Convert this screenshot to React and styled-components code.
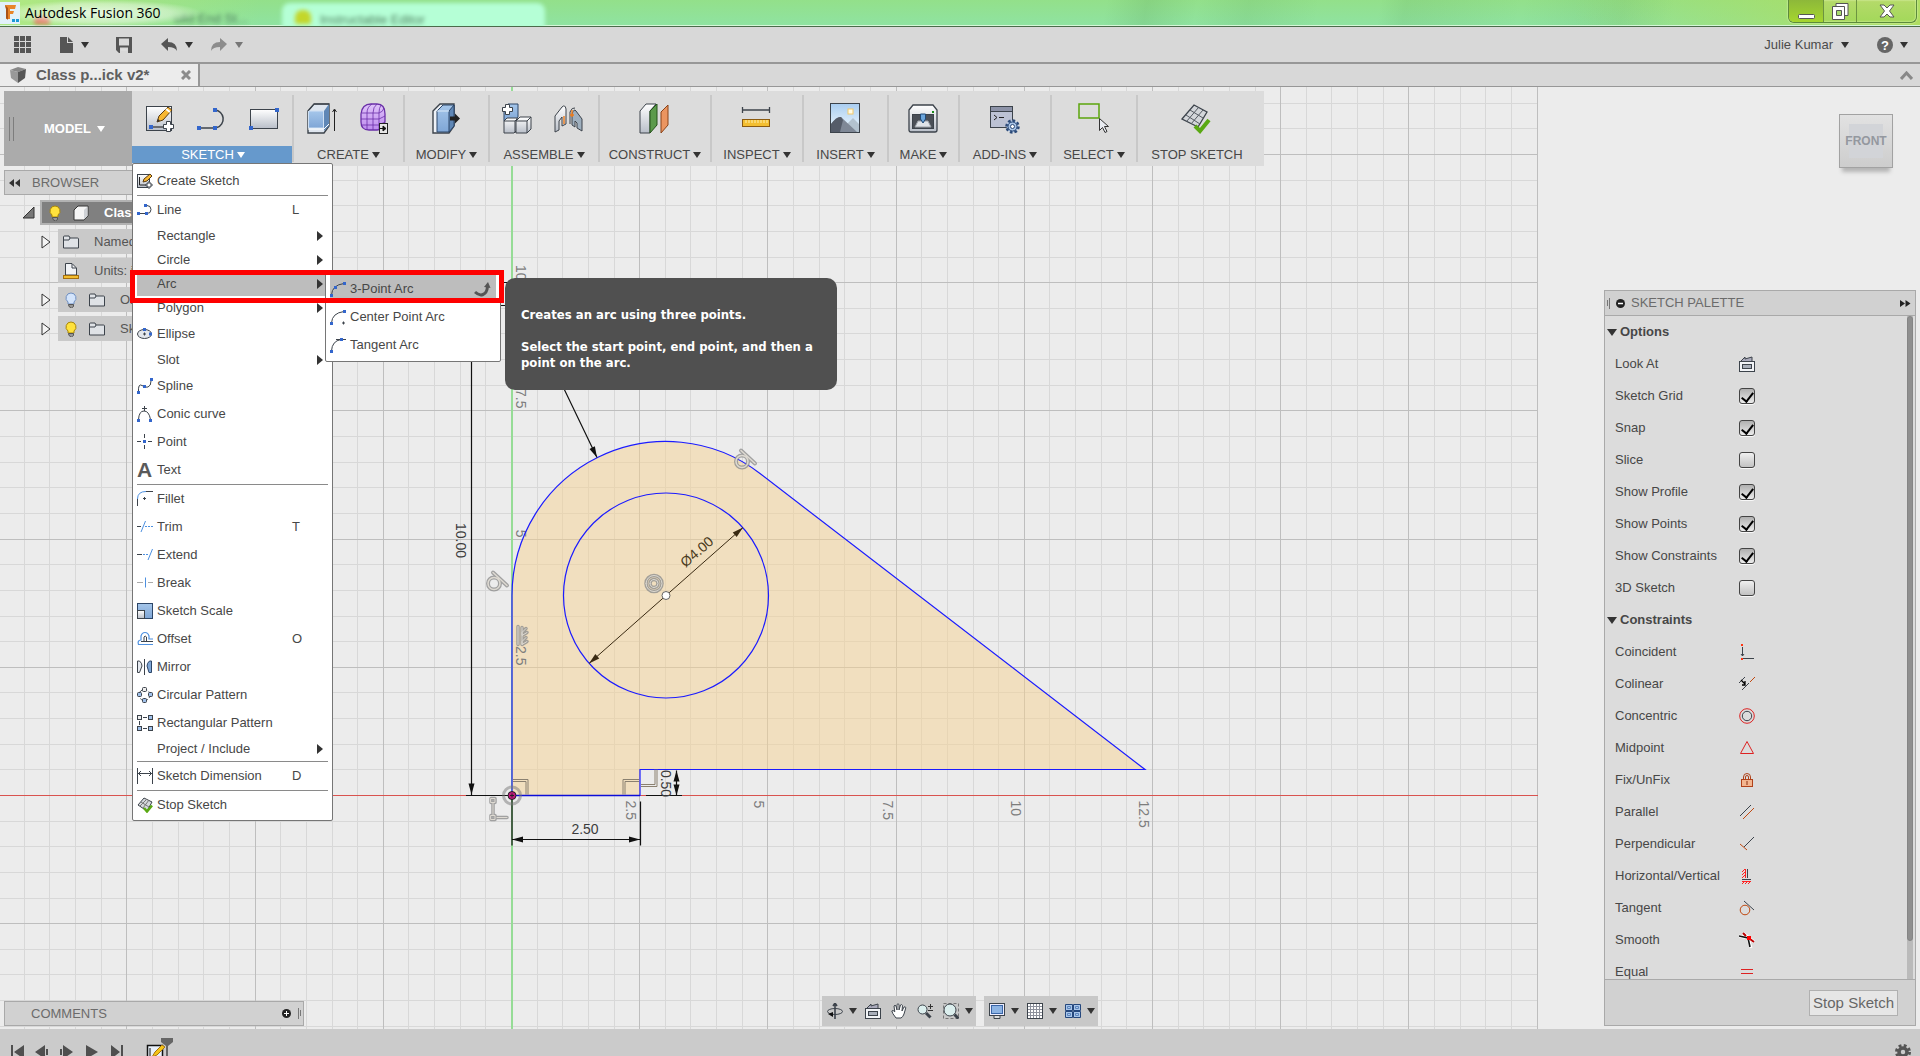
import React,{useState} from 'react';
import styled,{createGlobalStyle} from 'styled-components';

const Global=createGlobalStyle`
  *{box-sizing:border-box;}
  body{
    margin:0;
    font-family:"Liberation Sans",Arial,sans-serif;
    font-size:13px;
    line-height:16px;
    color:#474747;
    background:#ececec;
  }
  button{
    font:inherit;
    color:inherit;
    background:none;
    border:0;
    padding:0;
    margin:0;
    text-align:left;
  }
  svg{display:block;flex:none;}
`
const Page=styled.div`
  height:100vh;
  display:flex;
  flex-direction:column;
  overflow:hidden;
`
const Title={
  Bar:styled.header`
    height:27px;
    flex:none;
    display:flex;
    align-items:flex-start;
    position:relative;
    overflow:hidden;
    border-bottom:1px solid #4b6b4b;
    box-shadow:inset 0 -1px 0 #d5f7d8;
    background:
      linear-gradient(90deg,#b9ea7fcc 0,#b9ea7f00 260px),
      linear-gradient(100deg,#0000 1090px,#3a7a3a22 1130px,#0000 1180px,#3a7a3a18 1230px,#0000 1300px,#0000 1360px,#3a7a3a18 1385px,#0000 1500px,#3a7a3a18 1600px,#0000 1650px),
      linear-gradient(90deg,#0000 82%,#aede60 100%),
      linear-gradient(#93e08a,#8fe3a2);
  `,
  Name:styled.div`
    display:flex;
    align-items:center;
    gap:5px;
    height:26px;
    padding-right:40px;
    font:14px/20px "Open Sans","Noto Sans",sans-serif;
    color:#000;
    position:relative;
    background:radial-gradient(ellipse at center,#ffffffbb 0,#ffffff66 50%,#ffffff00 72%);
  `,
  Ghost:styled.div`
    position:absolute;
    left:${p=>p.$x}px;
    top:${p=>p.$lit?3:8}px;
    width:${p=>p.$w}px;
    height:28px;
    padding:${p=>p.$lit?'9px 38px':'3px 0'};
    border-radius:8px 8px 0 0;
    background:${p=>p.$lit?'#b5ffd6':'none'};
    color:#4f7f5f;
    filter:blur(2px);
    white-space:nowrap;
  `,
  Blob:styled.i`
    position:absolute;
    left:${p=>p.$x}px;
    bottom:2px;
    width:16px;
    height:${p=>p.$h}px;
    border-radius:7px 7px 2px 2px;
    background:${p=>p.$c};
    filter:blur(2px);
  `,
  Buttons:styled.div`
    display:flex;
    margin-left:auto;
    margin-right:3px;
    height:23px;
    position:relative;
    border:1px solid #5c8a3c;
    border-top:0;
    border-radius:0 0 6px 6px;
    box-shadow:0 0 2px #f4ffd0,inset 0 0 2px #f0ffc8;
    background:linear-gradient(#b5da6a,#a3d85a);
    overflow:hidden;
  `,
  Button:styled.button`
    width:${p=>p.$w}px;
    display:flex;
    align-items:center;
    justify-content:center;
    border-right:1px solid #6c9440;
    background:${p=>p.$hot?'linear-gradient(#8db83a,#a5d62e)':'none'};
    &:last-child{border-right:0;}
  `
}
const Quick={
  Bar:styled.nav`
    height:37px;
    flex:none;
    display:flex;
    align-items:center;
    padding:0 12px 0 14px;
    background:#d8d8d8;
    border-bottom:2px solid #979797;
  `,
  Item:styled.button`
    display:flex;
    align-items:center;
    gap:${p=>p.$gap||8}px;
    margin-right:${p=>p.$after||0}px;
    color:#4b4b4b;
  `,
  Spacer:styled.div`
    flex:1;
  `
}
const Caret=styled.i`
  display:block;
  width:0;
  height:0;
  flex:none;
  border:${p=>p.$size||4}px solid transparent;
  border-top:${p=>(p.$size||4)+2}px solid ${p=>p.$c||'#333'};
  border-bottom:0;
`
const Tabs={
  Strip:styled.div`
    height:23px;
    flex:none;
    display:flex;
    align-items:stretch;
    justify-content:space-between;
    background:#d8d8d8;
    border-bottom:1px solid #979797;
  `,
  Tab:styled.div`
    width:200px;
    display:flex;
    align-items:center;
    padding:0 7px 0 10px;
    gap:10px;
    background:#ececec;
    border-right:2px solid #979797;
    font-weight:bold;
    font-size:15px;
    color:#5f5f5f;
    & span{flex:1;}
  `,
  Fold:styled.button`
    padding:0 7px;
  `
}
const Stage={
  Area:styled.main`
    flex:1;
    min-height:0;
    position:relative;
    display:flex;
    background:#ececec;
  `,
  Drawing:styled.svg`
    position:absolute;
    left:0;
    top:0;
    width:100%;
    height:100%;
    font-family:"Liberation Sans",Arial,sans-serif;
  `,
  Left:styled.div`
    flex:1;
    min-width:0;
    display:flex;
    flex-direction:column;
    padding:4px 0 3px 4px;
    position:relative;
    z-index:2;
  `,
  Right:styled.div`
    width:312px;
    flex:none;
    margin-right:4px;
    padding:27px 0 3px;
    display:flex;
    flex-direction:column;
    position:relative;
    z-index:1;
  `
}
const Ribbon={
  Bar:styled.div`
    align-self:flex-start;
    display:flex;
    height:75px;
    background:#dcdcdc;
    position:relative;
    z-index:1;
  `,
  Model:styled.button`
    width:128px;
    display:flex;
    align-items:center;
    padding-left:5px;
    gap:6px;
    background:#ababab;
    color:#fff;
    font-weight:bold;
    & span{padding-left:24px;}
  `,
  Grip:styled.i`
    width:5px;
    height:24px;
    border:1px solid #7d7d7d;
    border-width:0 1px;
  `,
  Group:styled.div`
    width:${p=>p.$w}px;
    padding-right:${p=>p.$end||0}px;
    display:flex;
    flex-direction:column;
    position:relative;
    &:not(:nth-child(2))::before{
      content:'';
      position:absolute;
      left:0;
      top:4px;
      height:67px;
      width:2px;
      background:#c8c8c8;
    }
  `,
  Icons:styled.div`
    height:55px;
    display:flex;
    align-items:center;
    justify-content:center;
    gap:${p=>p.$gap||20}px;
    padding-bottom:2px;
  `,
  Label:styled.button`
    height:17px;
    display:flex;
    align-items:center;
    justify-content:center;
    gap:3px;
    padding-left:2px;
    white-space:nowrap;
    background:${p=>p.$on?'#6699cc':'none'};
    color:${p=>p.$on?'#fff':'#474747'};
  `
}
const Menu={
  List:styled.ul`
    position:absolute;
    left:0;
    top:72px;
    width:201px;
    margin:0;
    padding:3px 0 1px;
    list-style:none;
    background:#fff;
    border:1px solid #767676;
    border-radius:2px;
    & li{position:relative;}
    & li[data-open]{z-index:1;}
  `,
  Row:styled.button`
    display:flex;
    align-items:center;
    gap:4px;
    height:${p=>p.$short?24:28}px;
    width:calc(100% - 11px);
    margin:0 7px 0 4px;
    padding-right:2px;
    background:${p=>p.$on?'#bdbdbd':'none'};
    & span{flex:1;white-space:nowrap;}
    & kbd{font:inherit;width:31px;}
  `,
  Blank:styled.i`
    width:16px;
  `,
  Glyph:styled.b`
    width:16px;
    font-size:21px;
    line-height:24px;
    color:#5a5a5a;
  `,
  Arrow:styled.i`
    border:5px solid transparent;
    border-left:6px solid #333;
    border-right:0;
  `,
  Line:styled.li`
    height:1px;
    margin:0 4px;
    background:#8a8a8a;
  `,
  Sub:styled.div`
    position:absolute;
    left:192px;
    top:0;
    width:176px;
    padding:2px 0;
    background:#fff;
    border:1px solid #767676;
    border-radius:2px;
  `,
  SubRow:styled.button`
    display:flex;
    align-items:center;
    gap:4px;
    height:28px;
    width:calc(100% - 8px);
    margin:0 4px;
    padding-right:5px;
    background:${p=>p.$on?'#bdbdbd':'none'};
    & span{flex:1;}
  `,
  Mark:styled.div`
    position:absolute;
    left:-3px;
    top:-2px;
    width:374px;
    height:33px;
    border:5px solid #fe0000;
    pointer-events:none;
  `,
  Tip:styled.div`
    position:absolute;
    left:372px;
    top:6px;
    width:332px;
    padding:29px 16px 19px 16px;
    border-radius:10px;
    background:#505050;
    color:#fff;
    font:bold 13px/16px "DejaVu Sans Condensed","Noto Sans",sans-serif;
    & p{margin:0 0 16px;}
    & p:last-child{margin:0;}
  `
}
const Panel={
  Head:styled.div`
    width:300px;
    height:25px;
    flex:none;
    display:flex;
    align-items:center;
    margin-top:${p=>p.$top||0}px;
    padding:0 2px 0 ${p=>p.$pad||4}px;
    gap:${p=>p.$gap||12}px;
    background:#d1d1d1;
    border:1px solid #a9a9a9;
    color:#6b6b6b;
    & span{flex:1;}
  `,
  Bottom:styled.div`
    margin-top:auto;
  `
}
const Tree={
  List:styled.div`
    display:flex;
    flex-direction:column;
    gap:4px;
    margin-top:5px;
    margin-left:18px;
    width:282px;
  `,
  Row:styled.div`
    display:flex;
    align-items:center;
    height:25px;
    padding-left:${p=>p.$indent||0}px;
  `,
  Toggle:styled.button`
    width:18px;
  `,
  Body:styled.div`
    flex:1;
    height:100%;
    display:flex;
    align-items:center;
    gap:10px;
    padding-left:5px;
    background:${p=>p.$root?'#808080':'#c9c9c9'};
    border:${p=>p.$root?'2px solid #b2b2b2':'0'};
    color:${p=>p.$root?'#fff':'#555'};
    font-weight:${p=>p.$root?'bold':'normal'};
    & span{padding-left:5px;}
  `
}
const Cube=styled.div`
  align-self:flex-end;
  margin:0 23px 122px 0;
  width:54px;
  height:54px;
  flex:none;
  display:flex;
  align-items:center;
  justify-content:center;
  border:1px solid #a2a2a2;
  background:linear-gradient(#e2e2e2,#cdcdcd);
  box-shadow:0 7px 4px -3px #b4b4b4;
  & b{
    width:34px;
    height:34px;
    display:flex;
    align-items:center;
    justify-content:center;
    background:#d2d4d8;
    color:#94989f;
    font-size:12px;
  }
`
const Palette={
  Box:styled.section`
    flex:1;
    min-height:0;
    display:flex;
    flex-direction:column;
    border:1px solid #a9a9a9;
    background:#dcdcdc;
  `,
  Head:styled.div`
    height:25px;
    flex:none;
    display:flex;
    align-items:center;
    padding:0 4px 0 2px;
    gap:6px;
    background:#d1d1d1;
    border-bottom:1px solid #a9a9a9;
    color:#6b6b6b;
    & span{flex:1;}
  `,
  Body:styled.div`
    flex:1;
    min-height:0;
    display:flex;
    overflow:hidden;
  `,
  Rows:styled.div`
    flex:1;
  `,
  Track:styled.div`
    width:6px;
    margin-right:2px;
    background:#bababa;
    &::before{
      content:'';
      display:block;
      height:94%;
      border-radius:3px;
      background:#8f8f8f;
      border:1px solid #858585;
    }
  `,
  Section:styled.button`
    height:32px;
    display:flex;
    align-items:center;
    gap:3px;
    padding-left:2px;
    font-weight:bold;
  `,
  Row:styled.label`
    height:32px;
    display:flex;
    align-items:center;
    padding-left:10px;
    & span{width:124px;}
  `,
  Tool:styled.button`
    height:32px;
    width:100%;
    display:flex;
    align-items:center;
    padding-left:10px;
    & span{width:124px;}
  `,
  Check:styled.input`
    appearance:none;
    width:16px;
    height:16px;
    margin:0;
    border:1px solid #444;
    border-radius:3px;
    box-shadow:0 1px 0 #f8f8f8;
    background:linear-gradient(#f0f0f0,#c2c2c2);
    &:checked{
      background:linear-gradient(#b0b0b0,#ececec);
    }
    &:checked::after{
      content:'';
      display:block;
      width:5px;
      height:10px;
      margin:1px auto;
      border:solid #000;
      border-width:0 2px 2px 0;
      transform:rotate(38deg);
    }
  `,
  Foot:styled.div`
    height:46px;
    flex:none;
    display:flex;
    align-items:center;
    justify-content:flex-end;
    padding-right:17px;
    background:#d1d1d1;
    border-top:1px solid #a9a9a9;
  `,
  Stop:styled.button`
    height:26px;
    padding:0 3px;
    border:1px solid #b0b0b0;
    background:#e6e6e6;
    font-size:15px;
    color:#666;
  `
}
const Nav={
  Wrap:styled.div`
    position:absolute;
    z-index:1;
    left:50%;
    bottom:3px;
    transform:translateX(-50%);
    display:flex;
    gap:8px;
  `,
  Bar:styled.div`
    height:30px;
    display:flex;
    align-items:center;
    background:#c8c8c8;
  `,
  Button:styled.button`
    padding:0 5px;
  `,
  More:styled.button`
    width:12px;
    padding-left:1px;
  `
}
const Timeline={
  Bar:styled.footer`
    height:27px;
    flex:none;
    display:flex;
    align-items:flex-start;
    padding:16px 9px 0 10px;
    gap:9px;
    overflow:hidden;
    background:#cbcbcb;
  `,
  Step:styled.button`
    margin-left:11px;
    margin-top:-7px;
  `,
  Gear:styled.button`
    margin-left:auto;
    margin-top:-1px;
  `
}

/* shared pieces */
const D='#3c434b',B='#3366cc',R='#d22';
function Svg({w=16,h,children}){
  return <svg width={w} height={h||w} viewBox={`0 0 ${w} ${h||w}`} fill="none" stroke={D} aria-hidden="true">{children}</svg>
}
const Dot=({x,y,s=3,c=B})=><rect x={x} y={y} width={s} height={s} fill={c} stroke="none"/>
const Plus=({x,y})=>(
  <path d={`M${x+3} ${y}h4v3h3v4h-3v3h-4v-3h-3v-4h3z`} fill="#fff"/>
)
function Defs(){
  return (
    <defs>
      <linearGradient id="gs" x1="0" y1="0" x2="0" y2="1"><stop offset="0" stopColor="#fff"/><stop offset="1" stopColor="#b9bfc9"/></linearGradient>
      <linearGradient id="gb" x1="0" y1="0" x2="0" y2="1"><stop offset="0" stopColor="#a5c6ea"/><stop offset="1" stopColor="#7fa6d6"/></linearGradient>
      <linearGradient id="gp" x1="0" y1="0" x2="0" y2="1"><stop offset="0" stopColor="#e0c4fa"/><stop offset="1" stopColor="#bd8bee"/></linearGradient>
      <linearGradient id="sky" x1="0" y1="0" x2="0" y2="1"><stop offset="0" stopColor="#a9cdf0"/><stop offset="1" stopColor="#f3fbff"/></linearGradient>
    </defs>
  )
}

/* ribbon icons, 30px box */
const big={
  sketch:<Svg w={30}>
    <rect x="1.5" y="3.5" width="25" height="24" fill="url(#gs)"/>
    <path d="M5 24h13" stroke="#111"/><Dot x={4} y={22} s={4}/>
    <path d="M12 19l2-6 9-9 4 3-9 10z" fill="#f7b733" stroke="#5a3a10"/><path d="M21 6l4 3" stroke="#fff" strokeWidth="2"/><path d="M12 19l1-3 2 1.500z" fill="#333" stroke="none"/>
    <Plus x={18.5} y={18.5}/>
  </Svg>,
  line:<Svg w={30}><path d="M3 25h16M18 7a9 9 0 0 1 2 17.500" strokeWidth="1.500"/><Dot x={0} y={23} s={4}/><Dot x={16} y={23} s={4}/><Dot x={16} y={5} s={4}/></Svg>,
  rect:<Svg w={30}><rect x="1.5" y="6.500" width="27" height="19" fill="url(#gs)"/><Dot x={0} y={23} s={4}/><Dot x={26} y={5} s={4}/></Svg>,
  extrude:<Svg w={32} h={32}>
    <path d="M2 9l6-7h15v22l-5 7H2z" fill="#dfe6ef" strokeWidth="1.400"/><path d="M2.500 9h15v17h-15z" fill="url(#gb)" stroke="#cfe0f3"/><path d="M18 9l5-7v22l-5 5z" fill="#5f87b6" stroke="none"/><path d="M2 9l6-7h15" /><path d="M2 27h16l5-5" stroke="#fff"/>
    <path d="M28.500 29V8M26.500 10l2-3 2 3" stroke="#222"/>
  </Svg>,
  form:<Svg w={32} h={32}>
    <path d="M3 12Q4 2 13 2h6q8 0 8 10v7q0 9-8 9h-8q-8 0-8-8z" fill="url(#gp)" stroke="#6a2fa8" strokeWidth="1.300"/>
    <path d="M4 11h17q4-1 5-5M3 17h18l6-3M3 23h18l6-3M9 28V11q0-6 5-9M15 28V11q0-6 4-9M21 28V11q0-5 2-8" stroke="#6a2fa8" strokeWidth=".8"/>
    <rect x="21.500" y="21.500" width="8" height="10" fill="#e6e6e6" stroke="#222"/><path d="M22 26.500h4M25 24l3 2.500-3 2.500z" fill="#111" stroke="#111"/>
  </Svg>,
  press:<Svg w={32} h={32}>
    <path d="M3 9l7-7h14v22l-5 7H3z" fill="#eef2f7" strokeWidth="1.400"/><path d="M7 9l6-6h11v21l-5 6H7z" fill="url(#gb)" stroke="#2d4668"/><path d="M19 9l5-6v21l-5 6z" fill="#5f87b6" stroke="#2d4668"/><path d="M7 9h12" stroke="#dcebfa"/>
    <path d="M20 14.500h5v-3l5 5-5 5v-3h-5z" fill="#222" stroke="none"/>
  </Svg>,
  comp:<Svg w={32} h={32}>
    <path d="M3 6l4-4h10v13l-3 4H3z" fill="url(#gb)" stroke="#2d4668"/>
    <path d="M3 19l3-3h10v12l-3 3H3z" fill="url(#gs)"/><path d="M15 19l4-4h11v12l-4 4H15z" fill="url(#gs)"/><path d="M15 19h11v12M26 19l4-4M3 19h11v12M14 19l2-2"/>
    <Plus x={1.5} y={2.5}/>
  </Svg>,
  joint:<Svg w={32} h={32}>
    <path d="M2 14l7-9q3-3 4 2v15l-4 2V15l-3 4v9l-4 2z" fill="url(#gs)"/><path d="M19 12q2-6 4-3l6 8v12l-5-3v-5l-2-2v6l-3-2z" fill="#9fb0bf"/><path d="M17 22V10q2-5 5-4" fill="none"/>
    <path d="M11 14v8M19 8v7M17 13h4" stroke="#ef7d1c" strokeWidth="1.400"/>
  </Svg>,
  plane:<Svg w={32} h={32}>
    <path d="M2 9l6-7h10l-6 7v22H2z" fill="url(#gs)"/><path d="M12 9l7-7v21l-7 8z" fill="#5c9a4b" stroke="#24521b"/><path d="M23 10l7-7v20l-7 8z" fill="#eb9560" stroke="#8a4318"/>
  </Svg>,
  ruler:<Svg w={30}>
    <path d="M1.500 4v6M28.500 4v6M1 7h28" strokeWidth="1.300"/><rect x="1.500" y="16.500" width="27" height="7" fill="#f3be30" stroke="#8a5a10"/><path d="M5 17v3M8 17v3M11 17v3M14 17v3M17 17v3M20 17v3M23 17v3M26 17v3" stroke="#fff0b0"/>
  </Svg>,
  image:<Svg w={32} h={32}>
    <rect x="1.500" y="1.500" width="29" height="29" fill="url(#sky)"/><rect x="19" y="7" width="5" height="5" fill="#fffbe6" stroke="#f3c96a"/><path d="M16 24l8-8 6 6v8H16z" fill="#b3c2ce" stroke="none"/><path d="M2 22q6-8 10-7l16 15H2z" fill="#7f8896" stroke="none"/><path d="M2 22q6-8 10-7l2 3-3 12H2z" fill="#555c69" stroke="none"/>
  </Svg>,
  make:<Svg w={32} h={32}>
    <path d="M2 8l4-5h20l4 5v20q0 2-2 2H4q-2 0-2-2z" fill="url(#gs)" strokeWidth="1.300"/><rect x="5.500" y="12.500" width="21" height="14" fill="#4a4f57"/><path d="M8 25l3-6h10l3 6z" fill="#dfe3e8" stroke="#9aa0a8"/><path d="M13.500 12v5l2.500 4 2.500-4v-5z" fill="#6aa5dc" stroke="#1f4a78"/><rect x="25" y="9" width="2" height="2" fill="#1a8a1a" stroke="none"/>
  </Svg>,
  addins:<Svg w={32} h={32}>
    <rect x="2.500" y="4.500" width="22" height="21" fill="#bcc2d4"/><rect x="3" y="5" width="21" height="4" fill="#8d93a8" stroke="none"/><path d="M3 9.500h21"/><path d="M6 13l3 2.500-3 2.500M11 15.500h5" stroke="#222"/>
    <circle cx="24.500" cy="24.500" r="6" fill="#a9c4e6" stroke="#2c4a78" strokeWidth="2.500" strokeDasharray="2.600 2"/><circle cx="24.500" cy="24.500" r="4.500" fill="#a9c4e6" stroke="#2c4a78"/><circle cx="24.500" cy="24.500" r="2" fill="#fff" stroke="#2c4a78"/>
  </Svg>,
  select:<Svg w={32} h={32}>
    <rect x="2" y="2" width="20" height="14" stroke="#5ba50d" strokeWidth="1.500"/><path d="M22.500 16.500v12l3-3 2.500 5 2-1-2.500-5h4z" fill="#e9ecf2" stroke="#333"/>
  </Svg>,
  stop:<Svg w={32} h={32}>
    <path d="M2 17L14 3l13 7-9 15z" fill="#d3d6da" strokeWidth="1.300"/><path d="M6 13l14 9M10 8l13 8M6.500 19.500l12-14M11 22l12-14" stroke="#555b63"/>
    <path d="M15 24l5 5 9-11" stroke="#5aa913" strokeWidth="4"/>
  </Svg>
}

/* 16px icons */
const arcIcon=<><path d="M1.500 14Q2 4 14 2.500"/><Dot x={0} y={13}/><Dot x={13} y={1}/></>
const small={
  sketch:<Svg><rect x=".5" y="1.500" width="12" height="13" fill="url(#gs)"/><path d="M2.500 4v8h7" stroke="#222"/><path d="M6 9l1-3 6-5 2 2-5 5z" fill="#f7b733" stroke="#5a3a10"/><path d="M11 9h2v2h2v2h-2v2h-2v-2H9v-2h2z" fill="#fff"/></Svg>,
  line:<Svg><path d="M1 11.500h9a4 4 0 0 0 0-8H8"/><Dot x={0} y={10}/><Dot x={8} y={10}/><Dot x={7} y={2}/></Svg>,
  ellipse:<Svg><ellipse cx="7.500" cy="8" rx="7" ry="4.500" fill="#e3e7ec"/><path d="M6 8h3M7.500 6.500v3"/><Dot x={6} y={2}/><Dot x={12} y={6.5}/></Svg>,
  spline:<Svg><path d="M1.500 14Q1 5 5 7.500T11 9Q14 8 14 3"/><Dot x={0} y={13}/><Dot x={6} y={7}/><Dot x={13} y={0}/></Svg>,
  conic:<Svg><path d="M1.500 13.500Q2 5 7 5T13.500 13.500M5 2.500h5M7.500 0v5"/><Dot x={0} y={13}/><Dot x={12} y={13}/></Svg>,
  point:<Svg><path d="M0 7.500h4M11 7.500h4M7.500 0v4M7.500 11v4"/><Dot x={6} y={6}/></Svg>,
  text:<Menu.Glyph aria-hidden="true">A</Menu.Glyph>,
  fillet:<Svg><path d="M.5 15V8M9 .5h7"/><path d="M.5 8Q.5.5 9 .5" stroke="#4d90e0"/><path d="M6 7.500h3M7.500 6v3"/></Svg>,
  trim:<Svg><path d="M0 7.500h4"/><path d="M4 13L8.500 2M8 7.500h2M11 7.500h2M14 7.500h2" stroke="#4d90e0"/></Svg>,
  extend:<Svg><path d="M0 7.500h5"/><path d="M6 7.500h2M9 7.500h2M11 13L15.500 2" stroke="#4d90e0"/></Svg>,
  split:<Svg><path d="M0 7.500h6M11 7.500h5" stroke="#aaa"/><path d="M8.500 2.500v10" stroke="#4d90e0"/></Svg>,
  scale:<Svg><rect x=".5" y=".5" width="15" height="15" fill="url(#gb)" stroke="#2d4668"/><rect x=".5" y="7.500" width="7" height="8" fill="url(#gs)"/></Svg>,
  offset:<Svg><path d="M16 13.500H1.500Q0 9.500 4 9V5Q5 1.500 8 1.500T12 5v3h4" stroke="#4d90e0" strokeWidth="1.200"/><path d="M16 10.500H4M7 10V6q1-2 2.500 0v4.500"/></Svg>,
  mirror:<Svg><path d="M7.500 0v16"/><path d="M.5 2h2Q5 4 5 7L2.500 13.500H.5z" fill="#e6eaf0"/><path d="M14.500 2h-2Q10 4 10 7l2 6.500h2.500z" fill="#7fa6d6" stroke="#2d4668"/></Svg>,
  circ:<Svg><circle cx="7.500" cy="8" r="5.500" strokeDasharray="3 2"/><rect x="5.500" y=".5" width="4" height="4" rx="1" fill="#eee"/><rect x=".5" y="5.500" width="4" height="4" rx="1" fill="#9fc0ea"/><rect x="11.500" y="5.500" width="4" height="4" rx="1" fill="#9fc0ea"/><rect x="5.500" y="11.500" width="4" height="4" rx="1" fill="#9fc0ea"/></Svg>,
  rectp:<Svg><path d="M6 2.500h4M2.500 6v4M6 13.500h4"/><rect x=".5" y=".5" width="4" height="4" fill="#eee"/><rect x="11.500" y=".5" width="4" height="4" fill="#9fc0ea"/><rect x=".5" y="11.500" width="4" height="4" fill="#9fc0ea"/><rect x="11.500" y="11.500" width="4" height="4" fill="#9fc0ea"/></Svg>,
  dim:<Svg><path d="M.5 0v16M15.500 0v16M1 5.500h14M4 3L1.500 5.500 4 8M12 3l2.500 2.500L12 8"/></Svg>,
  stop:<Svg><path d="M1 8l6-7 8 4-5 9z" fill="#d5d8dc"/><path d="M4 5l8 5M3 9l7-7M6 11l6-8" stroke="#777"/><path d="M7 11l3 3.500 5-6" stroke="#5aa913" strokeWidth="2.500"/></Svg>,
  arc3:<Svg>{arcIcon}<Dot x={4} y={5}/></Svg>,
  arcC:<Svg>{arcIcon}<path d="M12 14h3M13.500 12.500v3"/></Svg>,
  arcT:<Svg><path d="M1.500 14Q2 4 11 2.500M6 2.500h10"/><Dot x={0} y={13}/><Dot x={10} y={1}/></Svg>,
  again:<Svg w={17} h={16}><path d="M1 11q4 4 8 2.500 4-1.500 4.500-8" stroke="#555" strokeWidth="3"/><path d="M10 6l4-5 2.500 6z" fill="#555" stroke="none"/></Svg>,
  look:<Svg><rect x=".5" y="5.500" width="15" height="10" fill="#f2f4f7"/><rect x="3.500" y="8.500" width="9" height="4" fill="#a9afba"/><path d="M2 5l4-4v2l7-2v4" fill="#aab"/></Svg>,
  coincident:<Svg><path d="M3.500 3v9M2 10l1.500 2L5 10M4 14.500h11"/><Dot x={2} y={0} s={2} c="#f31"/><Dot x={2} y={14} s={2} c="#f31"/></Svg>,
  colinear:<Svg><path d="M0 7l6-6M3 14l7-7" /><path d="M11 6l5-5" stroke="#c0480f"/><path d="M2 4l4 4M6 5v4H3" stroke="#000" strokeWidth="1.300"/></Svg>,
  concentric:<Svg><circle cx="8" cy="8" r="7.300" stroke={R}/><circle cx="8" cy="8" r="4.700"/></Svg>,
  midpoint:<Svg><path d="M1.500 13.500L8 1.500l6.500 12z" stroke={R}/></Svg>,
  fix:<Svg><path d="M4.500 8V5a3.500 3.500 0 0 1 7 0V8M6.500 8V5a1.500 1.500 0 0 1 3 0V8" stroke="#b0421a"/><rect x="2.500" y="7.500" width="11" height="7" fill="#f3b58f" stroke="#b0421a"/><path d="M8 9v4" stroke="#8a2f10"/></Svg>,
  parallel:<Svg><path d="M1 12L12 1"/><path d="M4 15L15 4" stroke="#c0480f"/></Svg>,
  perp:<Svg><path d="M5 11L15 1"/><path d="M1 8l7 6" stroke="#c0480f"/></Svg>,
  hv:<Svg><path d="M8.500 1v9M3 11.500h9"/><path d="M6.500 1v9M3 13.500h9" stroke="#f22"/><path d="M6 1L3 4M6 4L3 7M6 7l-3 3M5 14l-2 2M8 14l-2 2M11 14l-2 2" stroke="#f22"/></Svg>,
  tangent:<Svg><circle cx="6" cy="10" r="4.800" stroke="#c0480f"/><path d="M5 1l10 9"/></Svg>,
  smooth:<Svg><path d="M0 4l9 2 3 10M4 1l11 9" stroke="#fff" strokeWidth="3"/><path d="M0 4l9 2 2 9" stroke="#111" strokeWidth="1.600"/><path d="M4 1l3 3M11 7l4 3" stroke="#b00" strokeWidth="2"/><Dot x={8} y={4} s={4} c="#f00"/></Svg>,
  equal:<Svg><path d="M2 5.500h12M2 9.500h12" stroke={R}/></Svg>,
  bulb:<Svg><path d="M8 1a5 5 0 0 1 3 9v2H5v-2a5 5 0 0 1 3-9z" fill="#ffe23d" stroke="#a8860a"/><path d="M5.500 12.500h5v2l-2 1.500-2.500-1.500z" fill="#999" stroke="#555"/></Svg>,
  bulbOff:<Svg><path d="M8 1a5 5 0 0 1 3 9v2H5v-2a5 5 0 0 1 3-9z" fill="#d3e4fb" stroke="#6f8fc0"/><path d="M5.500 12.500h5v2l-2 1.500-2.500-1.500z" fill="#999" stroke="#555"/></Svg>,
  folder:<Svg><path d="M.5 14V3q0-1 1-1H6l1 2h7.500q1 0 1 1v9z" fill="#dfe2e6"/><path d="M1 6h5l1-2" /></Svg>,
  cube:<Svg><path d="M1 5l4-4h10v10l-4 4H1z" fill="#f4f4f4" stroke="#333"/><path d="M11 5v9.500l3.500-3.500V1.500z" fill="#cfd2d6" stroke="none"/></Svg>,
  units:<Svg><path d="M2.500 12V.5H9l4.500 4.500v7z" fill="#f1f3f6"/><path d="M9 1v4h4"/><rect x=".5" y="12.500" width="15" height="3" fill="#f3be30" stroke="#a5700f"/></Svg>,
  orbit:<Svg><ellipse cx="8" cy="8.500" rx="7.500" ry="3"/><path d="M8 1v15M6 3l2-3 2 3" strokeWidth="1.600"/><path d="M1 11l5-2v5z" fill="#111" stroke="none"/></Svg>,
  hand:<Svg><path d="M5 15Q1 10 .8 8q1-1.500 3 .8L3 3q1-1.500 2 0l1 4V1.500q1-1.500 2 0V7l1.500-5q1.500-1 2 .5L11 8l2-4q1.500-.8 1.800.8L13 11q-1 3-3 4z" fill="#fff"/></Svg>,
  zoom:<Svg><circle cx="5.500" cy="6.500" r="4.500" fill="#dcefee"/><path d="M9 10l4.500 4.500" strokeWidth="3"/><path d="M11 3.500h5M13.500 1v5M11 7.500h5" stroke="#333"/></Svg>,
  fit:<Svg><rect x=".5" y=".5" width="15" height="15" strokeDasharray="3 2" stroke="#777"/><circle cx="7" cy="7" r="6" fill="#dcefee"/><path d="M11.500 11.500l4 4" strokeWidth="3"/></Svg>,
  screen:<Svg><rect x=".5" y=".5" width="15" height="12" fill="#eef" /><rect x="2.500" y="2.500" width="11" height="8" fill="#8db4e4" stroke="#3a66a8"/><path d="M5 13v2.500h6V13" fill="#ddd"/></Svg>,
  grid:<Svg><rect x=".5" y=".5" width="15" height="15" fill="#fff"/><path d="M3.500 1v14M6.500 1v14M9.500 1v14M12.500 1v14M1 3.500h14M1 6.500h14M1 9.500h14M1 12.500h14" stroke="#8d919c"/></Svg>,
  views:<Svg><path d="M.5 1.500h7v6h-7zM8.500 1.500h7v6h-7zM.5 8.500h7v6h-7zM8.500 8.500h7v6h-7z" fill="#a9c6ea" stroke="#24477d"/><path d="M2.500 3.500h3v2h-3zM10.500 3.500h3v2h-3zM2.500 10.500h3v2h-3zM10.500 10.500h3v2h-3z" stroke="#5b84bd"/></Svg>
}

const groups=[
  {name:'CREATE',w:111,icons:['extrude','form']},
  {name:'MODIFY',w:85,icons:['press']},
  {name:'ASSEMBLE',w:110,icons:['comp','joint']},
  {name:'CONSTRUCT',w:112,icons:['plane']},
  {name:'INSPECT',w:92,icons:['ruler']},
  {name:'INSERT',w:85,icons:['image']},
  {name:'MAKE',w:71,icons:['make']},
  {name:'ADD-INS',w:92,icons:['addins']},
  {name:'SELECT',w:86,icons:['select']},
  {name:'STOP SKETCH',w:128,icons:['stop'],plain:true}
]
const menu=[
  {t:'Create Sketch',i:'sketch'},null,
  {t:'Line',i:'line',k:'L'},
  {t:'Rectangle',more:true},
  {t:'Circle',more:true},
  {t:'Arc',more:true},
  {t:'Polygon',more:true},
  {t:'Ellipse',i:'ellipse'},
  {t:'Slot',more:true},
  {t:'Spline',i:'spline'},
  {t:'Conic curve',i:'conic'},
  {t:'Point',i:'point'},
  {t:'Text',i:'text'},null,
  {t:'Fillet',i:'fillet'},
  {t:'Trim',i:'trim',k:'T'},
  {t:'Extend',i:'extend'},
  {t:'Break',i:'split'},
  {t:'Sketch Scale',i:'scale'},
  {t:'Offset',i:'offset',k:'O'},
  {t:'Mirror',i:'mirror'},
  {t:'Circular Pattern',i:'circ'},
  {t:'Rectangular Pattern',i:'rectp'},
  {t:'Project / Include',more:true},null,
  {t:'Sketch Dimension',i:'dim',k:'D'},null,
  {t:'Stop Sketch',i:'stop'}
]
const constraints=[
  ['Coincident','coincident'],['Colinear','colinear'],['Concentric','concentric'],
  ['Midpoint','midpoint'],['Fix/UnFix','fix'],['Parallel','parallel'],
  ['Perpendicular','perp'],['Horizontal/Vertical','hv'],['Tangent','tangent'],
  ['Smooth','smooth'],['Equal','equal']
]

function ArcMenu(){
  return (
    <>
      <Menu.Sub>
        <Menu.SubRow $on>{small.arc3}<span>3-Point Arc</span>{small.again}</Menu.SubRow>
        <Menu.SubRow>{small.arcC}<span>Center Point Arc</span></Menu.SubRow>
        <Menu.SubRow>{small.arcT}<span>Tangent Arc</span></Menu.SubRow>
      </Menu.Sub>
      <Menu.Mark/>
      <Menu.Tip role="tooltip">
        <p>Creates an arc using three points.</p>
        <p>Select the start point, end point, and then a point on the arc.</p>
      </Menu.Tip>
    </>
  )
}
function SketchMenu(){
  return (
    <Menu.List>
      {menu.map((m,n)=>!m?<Menu.Line key={n}/>:(
        <li key={n} data-open={m.t=='Arc'?true:undefined}>
          <Menu.Row $short={m.more} $on={m.t=='Arc'}>
            {m.i?small[m.i]:<Menu.Blank/>}
            <span>{m.t}</span>
            {m.k?<kbd>{m.k}</kbd>:null}
            {m.more?<Menu.Arrow/>:null}
          </Menu.Row>
          {m.t=='Arc'?<ArcMenu/>:null}
        </li>
      ))}
    </Menu.List>
  )
}

/* grey constraint badges drawn on the sketch */
function Badge({d,w=4}){
  return <g fill="none" strokeLinecap="round" strokeLinejoin="round">
    <path d={d} stroke="#8f8f8f" strokeOpacity=".8" strokeWidth={w}/>
    <path d={d} stroke="#dedad2" strokeWidth={w-2.5}/>
  </g>
}
const tangentAt=(x,y)=>`M${x-6} ${y}a6 6 0 1 0 12 0a6 6 0 1 0 -12 0M${x-1} ${y-11}L${x+13} ${y+2}`
const head=(x,y,a)=><path d="M0 0l-11-3v6z" fill="currentColor" stroke="none" transform={`translate(${x} ${y}) rotate(${a})`}/>
const U=51.28;
function Drawing(){
  let cols=[],rows=[];
  for(let n=-20;n<=40;n++) cols.push(n);
  for(let n=-9;n<=27;n++) rows.push(n);
  let snap=n=>Math.round(n*U/2);
  return (
    <Stage.Drawing aria-hidden="true">
      <Defs/>
      <g transform="translate(512 708.5)">
        <g strokeWidth="1" shapeRendering="crispEdges">
          {cols.filter(n=>n%5).map(n=><path key={n} d={`M${snap(n)-.5} -720V330`} stroke="#d8d8d8"/>)}
          {rows.filter(n=>n%5).map(n=><path key={n} d={`M-520 ${-snap(n)}H1026`} stroke="#d8d8d8"/>)}
          {cols.filter(n=>n%5==0).map(n=><path key={n} d={`M${snap(n)-.5} -720V330`} stroke="#bebebe"/>)}
          {rows.filter(n=>n%5==0).map(n=><path key={n} d={`M-520 ${-snap(n)}H1026`} stroke="#bebebe"/>)}
        </g>
        <path d="M0 -720V330" stroke="#96dc96" strokeWidth="2"/>
        <path d="M-520 0H1026" stroke="#d9534f"/>
        <path d="M0 0V-200A154 154 0 0 1 248 -322L633 -26H128V0Z" fill="#f6d292" fillOpacity=".5"/>
        <g fill="#7d7d7d" fontSize="14">
          {[2.5,5,7.5,10,12.5].map(v=><text key={v} transform={`translate(${Math.round(v*U)-14} 5) rotate(90)`}>{v}</text>)}
          {[2.5,5,7.5,10].map(v=><text key={v} textAnchor="end" transform={`translate(4 ${-Math.round(v*U)-2}) rotate(90)`}>{v}</text>)}
        </g>
        <g fill="none" stroke="#1b1bff" strokeWidth="1.200">
          <path d="M0 0V-200A154 154 0 0 1 248 -322L633 -26H128V0Z"/>
          <circle cx="154" cy="-200" r="102.500"/>
        </g>
        <Badge d={tangentAt(-18,-212)}/>
        <Badge d={tangentAt(230,-334)}/>
        <Badge w={3.5} d="M6 -169v18M14 -167l-4 4v3l5 -3M14 -158l-4 4v3l5 -3M10 -168v17"/>
        <Badge w={3.5} d="M134 -212a8 8 0 1 0 16 0a8 8 0 1 0 -16 0M138 -212a4 4 0 1 0 8 0a4 4 0 1 0 -8 0"/>
        <g fill="none" stroke="#8a8070" strokeWidth="1">
          <path d="M1 -16H16V-1M1 -14H14V-1M111 -1V-16H127M113 -1V-14H127M129 -9H145V-26M129 -11H143V-26"/>
        </g>
        <g stroke="#111" color="#111" strokeWidth="1.200" fill="none">
          <path d="M-40.500 -512V0M-46 0H0M134 0H170M-46 -513H160"/>{head(-40.5,-1,90)}
          <path d="M0 2V50M128.500 6V50M0 44H128"/>{head(0,44,180)}{head(128,44,0)}
          <path d="M164.500 -25V0"/>{head(164.5,-25,-90)}{head(164.5,0,90)}
          <path d="M-12 -490H12L85 -338"/>{head(85,-338,64)}
        </g>
        <g stroke="#3a2a12" color="#3a2a12" fill="none">
          <path d="M231 -268L77 -132"/>{head(231,-268,-41)}{head(77,-132,139)}
        </g>
        <g fill="#3c3c3c" fontSize="14" textAnchor="middle">
          <text transform="translate(-56 -255) rotate(90)">10.00</text>
          <text x="73" y="38">2.50</text>
          <text transform="translate(149 -12) rotate(90)">0.50</text>
          <text fill="#4a3a20" transform="translate(188 -240) rotate(-41)">Ø4.00</text>
        </g>
        <circle cx="154" cy="-200" r="4" fill="#fff" stroke="#666"/>
        <path d="M0 0H128" stroke="#0d0dd8" strokeWidth="1.300"/>
        <circle r="8.500" fill="none" stroke="#777" strokeOpacity=".5" strokeWidth="3"/>
        <circle r="4" fill="#c0187f" stroke="#222"/><path d="M-2 0h4M0-2v4" stroke="#222"/>
        <Badge w={3.5} d="M-21 3h4v4h-4zM-19 8v11M-21 20h4v4h-4zM-15 22H-5"/>
      </g>
    </Stage.Drawing>
  )
}

function BrowserPanel(){
  let rows=[
    {t:'Named Views',icons:['folder']},
    {t:'Units: in',icons:['units'],leaf:true},
    {t:'Origin',icons:['bulbOff','folder']},
    {t:'Sketches',icons:['bulb','folder']}
  ]
  return (
    <section>
      <Panel.Head $top={4}>
        <Svg w={11} h={8}><path d="M5 0v8L0 4zM11 0v8L6 4z" fill="#333" stroke="none"/></Svg>
        <span>BROWSER</span>
      </Panel.Head>
      <Tree.List>
        <Tree.Row>
          <Tree.Toggle aria-label="Collapse"><Svg w={13} h={13}><path d="M12 1v11H1z" fill="#777" stroke="#333"/></Svg></Tree.Toggle>
          <Tree.Body $root>{small.bulb}{small.cube}<span>Class p...ick v2</span></Tree.Body>
        </Tree.Row>
        {rows.map(r=>(
          <Tree.Row key={r.t} $indent={18}>
            {r.leaf?<Tree.Toggle as="i"/>:<Tree.Toggle aria-label="Expand"><Svg w={12} h={14}><path d="M2 1l8 6-8 6z" fill="#f5f5f5" stroke="#333"/></Svg></Tree.Toggle>}
            <Tree.Body>{r.icons.map(i=><React.Fragment key={i}>{small[i]}</React.Fragment>)}<span>{r.t}</span></Tree.Body>
          </Tree.Row>
        ))}
      </Tree.List>
    </section>
  )
}

function SketchPalette(){
  let [opts,setOpts]=useState([
    ['Sketch Grid',true],['Snap',true],['Slice',false],['Show Profile',true],
    ['Show Points',true],['Show Constraints',true],['3D Sketch',false]
  ]);
  function toggle(n){
    setOpts(opts.map((o,i)=>i==n?[o[0],!o[1]]:o));
  }
  return (
    <Palette.Box>
      <Palette.Head>
        <Svg w={3} h={11}><path d="M.5 2v6M2.500 0v11" stroke="#777"/></Svg>
        <Svg w={9}><circle cx="4.500" cy="4.500" r="4.500" fill="#222" stroke="none"/><path d="M2 4.500h5" stroke="#fff" strokeWidth="1.500"/></Svg>
        <span>SKETCH PALETTE</span>
        <Svg w={11} h={7}><path d="M0 0v7l5-3.500zM5.500 0v7l5-3.500z" fill="#222" stroke="none"/></Svg>
      </Palette.Head>
      <Palette.Body>
        <Palette.Rows>
          <Palette.Section><Caret $size={5}/>Options</Palette.Section>
          <Palette.Tool><span>Look At</span>{small.look}</Palette.Tool>
          {opts.map((o,n)=>(
            <Palette.Row key={o[0]}>
              <span>{o[0]}</span>
              <Palette.Check type="checkbox" checked={o[1]} onChange={()=>toggle(n)}/>
            </Palette.Row>
          ))}
          <Palette.Section><Caret $size={5}/>Constraints</Palette.Section>
          {constraints.map(c=>(
            <Palette.Tool key={c[0]}><span>{c[0]}</span>{small[c[1]]}</Palette.Tool>
          ))}
        </Palette.Rows>
        <Palette.Track/>
      </Palette.Body>
      <Palette.Foot><Palette.Stop>Stop Sketch</Palette.Stop></Palette.Foot>
    </Palette.Box>
  )
}

const More=()=><Nav.More aria-label="More"><Caret/></Nav.More>
const NavBtn=({i})=><Nav.Button aria-label={i}>{small[i]}</Nav.Button>
function NavBars(){
  return (
    <Nav.Wrap>
      <Nav.Bar><NavBtn i="orbit"/><More/><NavBtn i="look"/><NavBtn i="hand"/><NavBtn i="zoom"/><NavBtn i="fit"/><More/></Nav.Bar>
      <Nav.Bar><NavBtn i="screen"/><More/><NavBtn i="grid"/><More/><NavBtn i="views"/><More/></Nav.Bar>
    </Nav.Wrap>
  )
}

function App(){
  return (
    <Page>
      <Global/>
      <Title.Bar>
        <Title.Ghost $x={174} $w={80}>uild End St...</Title.Ghost>
        <Title.Blob $x={34} $h={8} $c="#e0705a"/>
        <Title.Ghost $x={282} $w={263} $lit>Instructable Editor</Title.Ghost>
        <Title.Blob $x={295} $h={14} $c="#c3d62a"/>
        <Title.Name>
          <Svg w={20} h={22}><rect width="20" height="22" y="0" fill="#e2f1fa" stroke="none"/><path d="M5 3h11l-1 4H10v2h4l-1 3h-3v5H6V7z" fill="#e8852a" stroke="none"/><path d="M5 3l3 3v12l-2-2V7z" fill="#a9541a" stroke="none"/><Dot x={12} y={17} c="#1b9ad6"/><Dot x={16} y={17} c="#1b9ad6"/></Svg>
          Autodesk Fusion 360
        </Title.Name>
        <Title.Buttons>
          <Title.Button $w={35} $hot aria-label="Minimize"><Svg w={17} h={20}><rect x=".5" y="13.500" width="16" height="4" rx="1" fill="#fff" stroke="#555"/></Svg></Title.Button>
          <Title.Button $w={33} aria-label="Restore"><Svg w={18}><path d="M5 1.500h12v12H5z" fill="#fff" stroke="#555"/><path d="M1.500 4.500h12v13h-12z" fill="#fff" stroke="#555"/><path d="M5.500 8.500h5v5h-5z" fill="#a8dc70" stroke="#555"/></Svg></Title.Button>
          <Title.Button $w={59} aria-label="Close"><Svg w={16} h={14}><path d="M1 1h4l3 3 3-3h4l-4.500 6 4.500 6h-4l-3-3-3 3H1l4.500-6z" fill="#fff" stroke="#555"/></Svg></Title.Button>
        </Title.Buttons>
      </Title.Bar>
      <Quick.Bar>
        <Quick.Item aria-label="Data panel" $after={29}><Svg w={17}><path d="M0 0h5v5H0zM6 0h5v5H6zM12 0h5v5h-5zM0 6h5v5H0zM6 6h5v5H6zM12 6h5v5h-5zM0 12h5v5H0zM6 12h5v5H6zM12 12h5v5h-5z" fill="#555" stroke="none"/></Svg></Quick.Item>
        <Quick.Item aria-label="File" $after={27}><Svg w={13} h={16}><path d="M0 0h7v6h6v10H0zM8 0l5 5H8z" fill="#555" stroke="none"/></Svg><Caret/></Quick.Item>
        <Quick.Item aria-label="Save" $after={29}><Svg><path fillRule="evenodd" d="M0 0h16v16H3l-3-3zM3 1.500v7h10v-7zM4 10.500V16h8v-5.500z" fill="#555" stroke="none"/><path d="M5 12h6v2H5z" fill="#ddd" stroke="none"/></Svg></Quick.Item>
        <Quick.Item aria-label="Undo" $after={18}><Svg><path d="M0 6l7-6v4q9 0 9 9-2-4-9-4v4z" fill="#555" stroke="none" transform="translate(0 1)"/></Svg><Caret/></Quick.Item>
        <Quick.Item aria-label="Redo"><Svg><path d="M16 6L9 0v4Q0 4 0 13q2-4 9-4v4z" fill="#8c8c8c" stroke="none" transform="translate(0 1)"/></Svg><Caret $c="#777"/></Quick.Item>
        <Quick.Spacer/>
        <Quick.Item $after={28}>Julie Kumar<Caret/></Quick.Item>
        <Quick.Item aria-label="Help" $gap={7}><Svg w={16}><circle cx="8" cy="8" r="8" fill="#666" stroke="none"/><text x="8" y="12.500" textAnchor="middle" fontFamily="Liberation Sans,Arial,sans-serif" fontWeight="bold" fontSize="13" fill="#fff" stroke="none">?</text></Svg><Caret/></Quick.Item>
      </Quick.Bar>
      <Tabs.Strip>
        <Tabs.Tab>
          <Svg><path d="M0 3l8-3 8 2-8 3z" fill="#888" stroke="none"/><path d="M0 3l8 2v11l-7-5z" fill="#999" stroke="none"/><path d="M8 5l8-3-1 9-7 5z" fill="#555" stroke="none"/></Svg>
          <span>Class p...ick v2*</span>
          <button aria-label="Close tab"><Svg w={10}><path d="M1 1l8 8M9 1L1 9" stroke="#8c8c8c" strokeWidth="3"/></Svg></button>
        </Tabs.Tab>
        <Tabs.Fold aria-label="Collapse toolbar"><Svg w={13} h={9}><path d="M1 8l5.500-6L12 8" stroke="#888" strokeWidth="3"/></Svg></Tabs.Fold>
      </Tabs.Strip>
      <Stage.Area>
        <Drawing/>
        <Stage.Left>
          <Ribbon.Bar>
            <Ribbon.Model><Ribbon.Grip/><span>MODEL</span><Caret $c="#fff"/></Ribbon.Model>
            <Ribbon.Group $w={160}>
              <Ribbon.Icons $gap={22}>{['sketch','line','rect'].map(i=><button key={i} aria-label={i}>{big[i]}</button>)}</Ribbon.Icons>
              <Ribbon.Label $on>SKETCH<Caret $c="#fff"/></Ribbon.Label>
              <SketchMenu/>
            </Ribbon.Group>
            {groups.map(g=>(
              <Ribbon.Group key={g.name} $w={g.w} $end={g.plain?8:0}>
                <Ribbon.Icons>{g.icons.map(i=><button key={i} aria-label={i}>{big[i]}</button>)}</Ribbon.Icons>
                <Ribbon.Label>{g.name}{g.plain?null:<Caret/>}</Ribbon.Label>
              </Ribbon.Group>
            ))}
          </Ribbon.Bar>
          <BrowserPanel/>
          <Panel.Bottom>
            <Panel.Head $pad={26} $gap={7}>
              <span>COMMENTS</span>
              <Svg w={9}><circle cx="4.500" cy="4.500" r="4.500" fill="#222" stroke="none"/><path d="M2 4.500h5M4.500 2v5" stroke="#fff"/></Svg>
              <Svg w={3} h={11}><path d="M.5 0v11M2.500 2v6" stroke="#777"/></Svg>
            </Panel.Head>
          </Panel.Bottom>
        </Stage.Left>
        <Stage.Right>
          <Cube><b>FRONT</b></Cube>
          <SketchPalette/>
        </Stage.Right>
        <NavBars/>
      </Stage.Area>
      <Timeline.Bar>
        {[
          'M1 0h2v14H1zM14 0v14L4 7z',
          'M10 0v14L0 7zM11 4h2v6h-2z',
          'M3 0v14l10-7zM0 4h2v6H0z',
          'M1 0v14l12-7z',
          'M1 0v14l9-7zM11 0h2v14h-2z'
        ].map(d=><button key={d} aria-label="Timeline step"><Svg w={16} h={14}><path d={d} fill="#4f4f4f" stroke="none"/></Svg></button>)}
        <Timeline.Step aria-label="Sketch feature">
          <Svg w={28} h={26}><rect x="1.500" y="7.500" width="15" height="16" fill="#e8f0fa" stroke="#111" strokeWidth="1.500"/><path d="M4 10v10h10" stroke="#111"/><path d="M6 19l3-5 7-7 3 2-8 8z" fill="#f5c518" stroke="#a5700f"/><path d="M15 0h12v4l-5 4v18h-2V8l-5-4z" fill="#666" stroke="none"/></Svg>
        </Timeline.Step>
        <Timeline.Gear aria-label="Settings"><Svg><circle cx="8" cy="8" r="6.500" stroke="#555" strokeWidth="3" strokeDasharray="2.800 2.300"/><circle cx="8" cy="8" r="4" stroke="#555" strokeWidth="3.500"/></Svg></Timeline.Gear>
      </Timeline.Bar>
    </Page>
  )
}

export default App;
